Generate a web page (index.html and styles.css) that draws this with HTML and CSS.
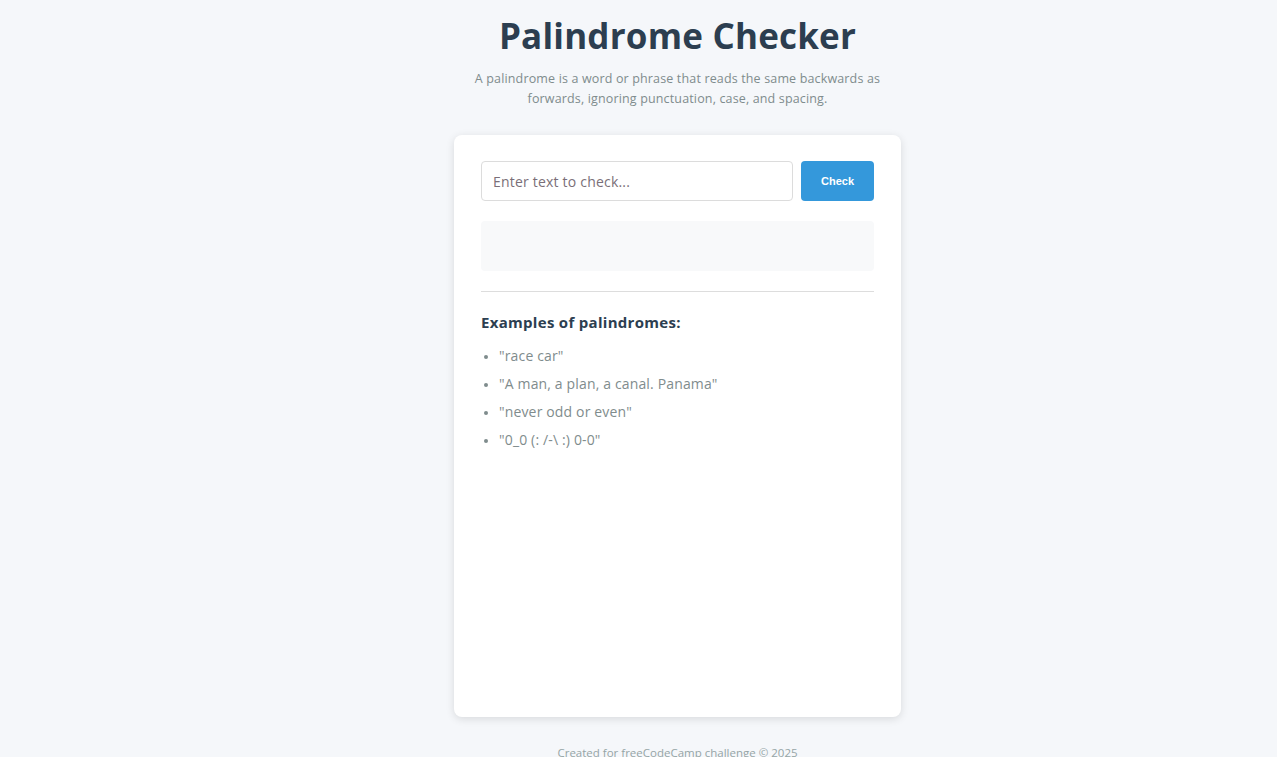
FILE: index.html
```html
<!DOCTYPE html>
<html lang="en">
<head>
<meta charset="UTF-8">
<title>Palindrome Checker</title>
<link rel="stylesheet" href="styles.css">
</head>
<body>
<main class="page">
  <header class="intro">
    <h1 class="title">Palindrome Checker</h1>
    <p class="subtitle">A palindrome is a word or phrase that reads the same backwards as forwards, ignoring punctuation, case, and spacing.</p>
  </header>
  <section class="card">
    <div class="check-row">
      <input class="text-input" type="text" placeholder="Enter text to check...">
      <button class="check-btn" type="button">Check</button>
    </div>
    <div class="result"></div>
    <hr class="divider">
    <h2 class="examples-title">Examples of palindromes:</h2>
    <ul class="examples">
      <li>"race car"</li>
      <li>"A man, a plan, a canal. Panama"</li>
      <li>"never odd or even"</li>
      <li>"0_0 (: /-\ :) 0-0"</li>
    </ul>
  </section>
  <footer class="footer">Created for freeCodeCamp challenge © 2025</footer>
</main>
</body>
</html>
```
FILE: styles.css
```css
* { box-sizing: border-box; }
html, body { margin: 0; padding: 0; }
body {
  background: #f5f7fa;
  font-family: "Open Sans", "DejaVu Sans", sans-serif;
  color: #2c3e50;
}
.page {
  display: flex;
  flex-direction: column;
  align-items: center;
  padding-top: 14px;
  padding-left: 78px;
}
.intro { text-align: center; width: 420px; }
.title {
  margin: 0;
  font-size: 35px;
  line-height: 44px;
  font-weight: 700;
  color: #2c3e50;
  letter-spacing: 0.2px;
}
.subtitle {
  margin: 11px 0 0;
  font-size: 12.5px;
  line-height: 20px;
  color: #7f8c8d;
  letter-spacing: 0.15px;
}
.card {
  margin-top: 26px;
  width: 447px;
  min-height: 582px;
  background: #fff;
  border-radius: 8px;
  box-shadow: 0 2px 8px rgba(0,0,0,0.12);
  padding: 26px 27px 27px;
}
.check-row { display: flex; gap: 8px; }
.text-input {
  flex: 1;
  height: 40px;
  border: 1px solid #dcdcdc;
  border-radius: 4px;
  padding: 0 11px;
  font-family: inherit;
  font-size: 14px;
  letter-spacing: 0.2px;
  color: #2c3e50;
  outline: none;
}
.text-input::placeholder { color: #7a6f78; }
.check-btn {
  width: 73px;
  height: 40px;
  border: 0;
  border-radius: 4px;
  background: #3498db;
  color: #fff;
  font-family: "Liberation Sans", Arial, sans-serif;
  font-weight: 700;
  font-size: 11px;
}
.result {
  margin-top: 20px;
  height: 50px;
  background: #f8f9fa;
  border-radius: 4px;
}
.divider {
  margin: 20px 0 0;
  border: 0;
  border-top: 1px solid #dddddd;
}
.examples-title {
  margin: 20px 0 0;
  font-size: 15px;
  line-height: 20px;
  font-weight: 700;
  color: #2c3e50;
  letter-spacing: 0.3px;
}
.examples {
  margin: 14px 0 0;
  padding-left: 18px;
  color: #7f8c8d;
  font-size: 14px;
  line-height: 20px;
  letter-spacing: 0.15px;
}
.examples li { margin-bottom: 8px; }
.examples li::marker { font-size: 11px; }
.footer {
  margin-top: 28px;
  font-size: 11.5px;
  color: #95a5a6;
}
```
